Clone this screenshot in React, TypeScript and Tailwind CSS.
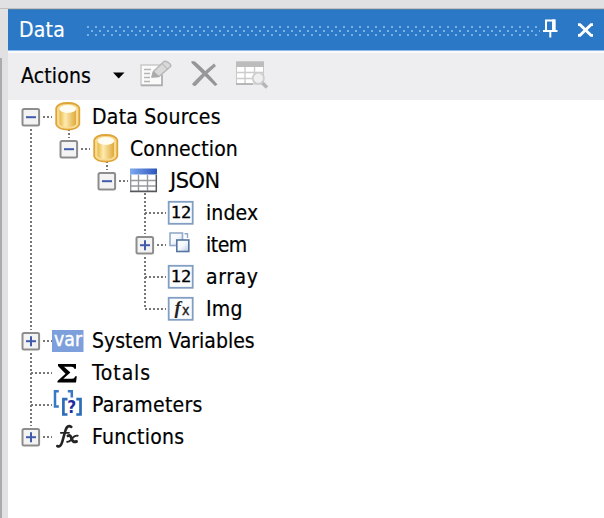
import React from "react";

type Guide = "none" | "line";
type IconName = "db" | "table" | "num" | "copy" | "fxbox" | "var" | "sum" | "param" | "fx";
interface Node {
  label: string;
  icon: IconName;
  guides: Guide[];
  box?: "plus" | "minus";
  up: boolean;
  down: boolean;
  below?: boolean;
  track: string;
}

const nodes: Node[] = [
  { label: "Data Sources", icon: "db", guides: [], box: "minus", up: false, down: true, below: true, track: "tracking-[0.25px]" },
  { label: "Connection", icon: "db", guides: ["line"], box: "minus", up: true, down: false, below: true, track: "tracking-[0.1px]" },
  { label: "JSON", icon: "table", guides: ["line", "none"], box: "minus", up: true, down: false, below: true, track: "pl-[2px] tracking-[-0.5px] [font-stretch:normal] font-['DejaVu_Sans',sans-serif]" },
  { label: "index", icon: "num", guides: ["line", "none", "none"], up: true, down: true, track: "tracking-[0.1px]" },
  { label: "item", icon: "copy", guides: ["line", "none", "none"], box: "plus", up: true, down: true, track: "tracking-[-0.5px]" },
  { label: "array", icon: "num", guides: ["line", "none", "none"], up: true, down: true, track: "tracking-[0.6px]" },
  { label: "Img", icon: "fxbox", guides: ["line", "none", "none"], up: true, down: false, track: "tracking-[0.3px]" },
  { label: "System Variables", icon: "var", guides: [], box: "plus", up: true, down: true, track: "tracking-[0px]" },
  { label: "Totals", icon: "sum", guides: [], up: true, down: true, track: "tracking-[0.9px]" },
  { label: "Parameters", icon: "param", guides: [], up: true, down: true, track: "tracking-[0.25px]" },
  { label: "Functions", icon: "fx", guides: [], box: "plus", up: true, down: false, track: "tracking-[0.25px]" },
];

const dots = { stroke: "#777", strokeWidth: 2, strokeDasharray: "2 2" };

function GuideCell({ kind }: { kind: Guide }) {
  return (
    <svg className="h-8 w-[38px] shrink-0" viewBox="0 0 38 32">
      {kind === "line" && <path d="M20 0V32" {...dots} />}
    </svg>
  );
}

function ExpanderCell({ node }: { node: Node }) {
  return (
    <svg className="h-8 w-[38px] shrink-0 overflow-visible" viewBox="0 0 38 32">
      {node.up && <path d="M20 0V16" {...dots} />}
      {node.down && <path d="M20 16V32" {...dots} />}
      <path d="M20 16H41" {...dots} />
      {node.below && <path d="M58 28V33" {...dots} />}
      {node.box && (
        <g>
          <rect x="9" y="5" width="22" height="22" fill="#fff" />
          <rect x="11.5" y="8" width="16.6" height="16.6" rx="1.5" fill="#f3f3f3" stroke="#8d8d8d" strokeWidth="2" />
          <path d="M15 16.2H25" stroke="#3f5ba9" strokeWidth="2" />
          {node.box === "plus" && <path d="M20 11.2V21.2" stroke="#3f5ba9" strokeWidth="2" />}
        </g>
      )}
    </svg>
  );
}

function NodeIcon({ name }: { name: IconName }) {
  return (
    <svg className="h-8 w-8 shrink-0" viewBox="0 0 32 32">
      <defs>
        <linearGradient id="gold"><stop offset="0" stopColor="#e9b949" /><stop offset=".35" stopColor="#fdebb0" /><stop offset="1" stopColor="#e0a93a" /></linearGradient>
        <linearGradient id="head"><stop offset="0" stopColor="#7ea9ee" /><stop offset="1" stopColor="#2c55bd" /></linearGradient>
        <linearGradient id="sheet" x2="1" y2="1"><stop offset="0" stopColor="#fff" /><stop offset=".5" stopColor="#f4f8fd" /><stop offset="1" stopColor="#b9cbe6" /></linearGradient>
      </defs>
      {name === "db" && (
        <g>
          <path d="M4.2 7Q6 2 15.7 2T27.3 7V23.5Q25 28.6 15.7 28.6T4.2 23.5Z" fill="#f8dc94" stroke="#dfa437" strokeWidth="1.8" />
          <path d="M7.5 8V23Q9 26 15.8 26T24 23V8Z" fill="url(#gold)" />
          <ellipse cx="15.8" cy="8" rx="8.3" ry="3.9" fill="#fffdf3" />
        </g>
      )}
      {name === "table" && (
        <g>
          <rect x="2" y="5" width="27" height="22" fill="#fff" />
          <rect x="2" y="3.5" width="27" height="6" fill="url(#head)" />
          <path d="M2.7 9.5V26.3H28.3V9.5M2.7 15.5H28.3M2.7 21H28.3M10.5 10V26M19.5 10V26" fill="none" stroke="#96999d" strokeWidth="1.4" />
          <path d="M2 26.5H29M28.4 10V27" stroke="#55585d" strokeWidth="1.3" />
        </g>
      )}
      {(name === "num" || name === "fxbox") && <rect x="2.7" y="4.8" width="24" height="22" fill="#fbfcfe" stroke="#829fc2" strokeWidth="1.8" />}
      {name === "num" && <text x="4.7" y="21.3" textLength="20.5" lengthAdjust="spacingAndGlyphs" fontFamily="DejaVu Sans Mono, monospace" fontSize="16" stroke="#000" strokeWidth=".3">12</text>}
      {name === "fxbox" && <text x="8.5" y="20.5" fontFamily="Liberation Serif, serif" fontStyle="italic" fontWeight="700" fontSize="19" fill="#222">f<tspan x="16" y="22" fontFamily="DejaVu Sans" fontStyle="normal" fontWeight="400" fontSize="14" stroke="#222" strokeWidth=".4">x</tspan></text>}
      {name === "copy" && (
        <g fill="url(#sheet)" transform="translate(1 0)">
          <rect x="3" y="4" width="12.5" height="12.5" stroke="#93abc9" strokeWidth="1.6" />
          <path d="M17.5 4.8H20.5V9" fill="none" stroke="#93abc9" strokeWidth="1.4" />
          <rect x="9.8" y="11" width="12" height="11.5" stroke="#55769e" strokeWidth="1.6" />
        </g>
      )}
      {name === "var" && (
        <g>
          <rect x="0" y="5" width="31.5" height="22" fill="#7d9fdb" />
          <text x="2" y="21.3" textLength="28" lengthAdjust="spacingAndGlyphs" fontFamily="DejaVu Sans, sans-serif" fontSize="19" fill="#fff" stroke="#fff" strokeWidth=".4">var</text>
        </g>
      )}
      {name === "sum" && <path d="M6 7H24V11.8H22.3Q22 9.7 19.5 9.7H12L18.4 15.6L11.3 21.8H20Q22.6 21.8 23.2 19.3H24.8L24 25.5H5.5V24L13.5 16.7L6 9Z" fill="#000" />}
      {name === "param" && (
        <g fill="none">
          <path d="M6.8 2.2H3V17.4H6.8" stroke="#3679c5" strokeWidth="2.5" />
          <path d="M15.8 2.2H19.8V8.5" stroke="#3679c5" strokeWidth="2.5" />
          <path d="M15.5 10.2H11.4V25.5H15.5M24.3 10.2H28.5V25.5H24.3" stroke="#2c6cb9" strokeWidth="2.7" />
          <text x="15.3" y="24" fontFamily="DejaVu Sans Condensed, DejaVu Sans, sans-serif" fontWeight="700" fontSize="17" fill="#1d2c9f">?</text>
        </g>
      )}
      {name === "fx" && (
        <g fill="none" stroke="#252525" strokeLinecap="round">
          <path d="M5.3 25Q8.5 26.8 10.3 20.6L13.6 9Q15.3 3.6 19.3 5.8" strokeWidth="2.6" />
          <path d="M8.8 11.8H17" strokeWidth="1.8" />
          <path d="M16 14.8Q18.6 13.6 19.6 17.7T24.5 20.5" strokeWidth="2.9" />
          <path d="M25.7 14.7Q22.5 14.2 20 17.7T15.2 20.8" strokeWidth="1.9" />
        </g>
      )}
    </svg>
  );
}

function TitleBar() {
  return (
    <header className="flex h-[42px] shrink-0 items-center border-t border-b border-t-[#4a7fae] border-b-[#8cbbea] bg-[#2a78c6]">
      <h1 className="w-[78px] pt-px pl-[11px] text-[21px] font-normal tracking-[0.2px] text-white">Data</h1>
      <svg className="mt-[2px] h-3 w-[454px] shrink-0" viewBox="0 0 454 12">
        <defs>
          <pattern id="grip" width="8" height="8" patternUnits="userSpaceOnUse">
            <rect x="1" y="1" width="2" height="2" fill="#7ab1e5" />
            <rect x="5" y="5" width="2" height="2" fill="#7ab1e5" />
          </pattern>
        </defs>
        <rect width="454" height="12" fill="url(#grip)" />
      </svg>
      <svg className="h-6 w-16 shrink-0" viewBox="0 0 64 24" fill="none" stroke="#fff">
        <path d="M6 12.5V2.5H14.5V12.5M3 13H17.5M10.3 13V19.5" strokeWidth="2" />
        <path d="M13.7 1.5V13" strokeWidth="3.3" />
        <path d="M38 6.7H40L51 17.3H53M38 17.3H40L51 6.7H53" strokeWidth="2.8" />
      </svg>
    </header>
  );
}

function Toolbar() {
  return (
    <div className="flex h-[49px] shrink-0 items-center border-t-2 border-white/70 bg-[#eeeef0]">
      <span className="w-[104px] pl-[13px] text-[21px] tracking-[0.15px]">Actions</span>
      <svg className="mb-[5px] h-8 w-[170px]" viewBox="0 0 170 32">
        <path d="M1 14.5H12.5L6.7 20.5Z" fill="#000" />
        <g>
          <path d="M29 7H50V27H29Z" fill="#fafafa" stroke="#c9c9c9" strokeWidth="1.5" />
          <path d="M29 27.5H50V17" fill="none" stroke="#aaa" strokeWidth="1.5" />
          <path d="M32 11.5H39M32 15.5H38M32 19.5H38M32 23.5H38" stroke="#b5b5b5" strokeWidth="1.4" />
          <path d="M40 19L41.5 13.5L52 3.5Q54 2.5 57 5T58 9L47 18.5Z" fill="#d9d9d9" stroke="#b8b8b8" strokeWidth="1.5" />
          <path d="M41.5 13.5L47 18.5L40 19ZM50 5.5L55.5 11" fill="#aaa" stroke="#aaa" />
        </g>
        <path d="M79.5 3L83 3.5Q92 11 105.5 26.5L103 28Q93 18 79.5 5Z" fill="#959595" />
        <path d="M102 5.5L104 8Q94 16 84 27.5Q81.5 29 80 26Q88 17 102 5.5Z" fill="#999" />
        <g>
          <rect x="124.5" y="4" width="27" height="22" fill="#fff" stroke="#c7c7c7" />
          <rect x="124" y="3.5" width="28" height="5.5" fill="#bcbcbc" />
          <path d="M124 14.5H152M124 20.5H152M133 9V26M142.5 9V26" stroke="#ccc" strokeWidth="1.4" />
          <path d="M124 26H141" stroke="#aaa" strokeWidth="1.5" />
          <path d="M149.5 24L155 29.5" stroke="#b5b5b5" strokeWidth="3.6" />
          <circle cx="146.3" cy="20.3" r="5.6" fill="#efefef" stroke="#cdcdcd" strokeWidth="1.8" />
        </g>
      </svg>
    </div>
  );
}

export default function App() {
  return (
    <div className="flex h-[518px] w-[604px] flex-col overflow-hidden bg-[#e1e1e3] font-['DejaVu_Sans_Condensed','DejaVu_Sans',sans-serif] text-black [-webkit-text-stroke:0.2px] [font-stretch:condensed]">
      <div className="h-[9px] shrink-0 border-b border-[#c2c0be]" />
      <div className="flex min-h-0 flex-1">
        <div className="w-2 shrink-0 pt-[49px]">
          <div className="h-full w-[2px] bg-[#aaa9ad]" />
        </div>
        <main className="flex min-w-0 flex-1 flex-col bg-white">
          <TitleBar />
          <Toolbar />
          <ul className="flex flex-col pt-px pl-[3px]">
            {nodes.map((node) => (
              <li key={node.label} className="flex h-8 items-center">
                {node.guides.map((kind, i) => <GuideCell key={i} kind={kind} />)}
                <ExpanderCell node={node} />
                <span className="ml-[3px] flex shrink-0"><NodeIcon name={node.icon} /></span>
                <span className={`ml-2 text-[21px] leading-8 whitespace-nowrap ${node.track}`}>{node.label}</span>
              </li>
            ))}
          </ul>
        </main>
      </div>
    </div>
  );
}
